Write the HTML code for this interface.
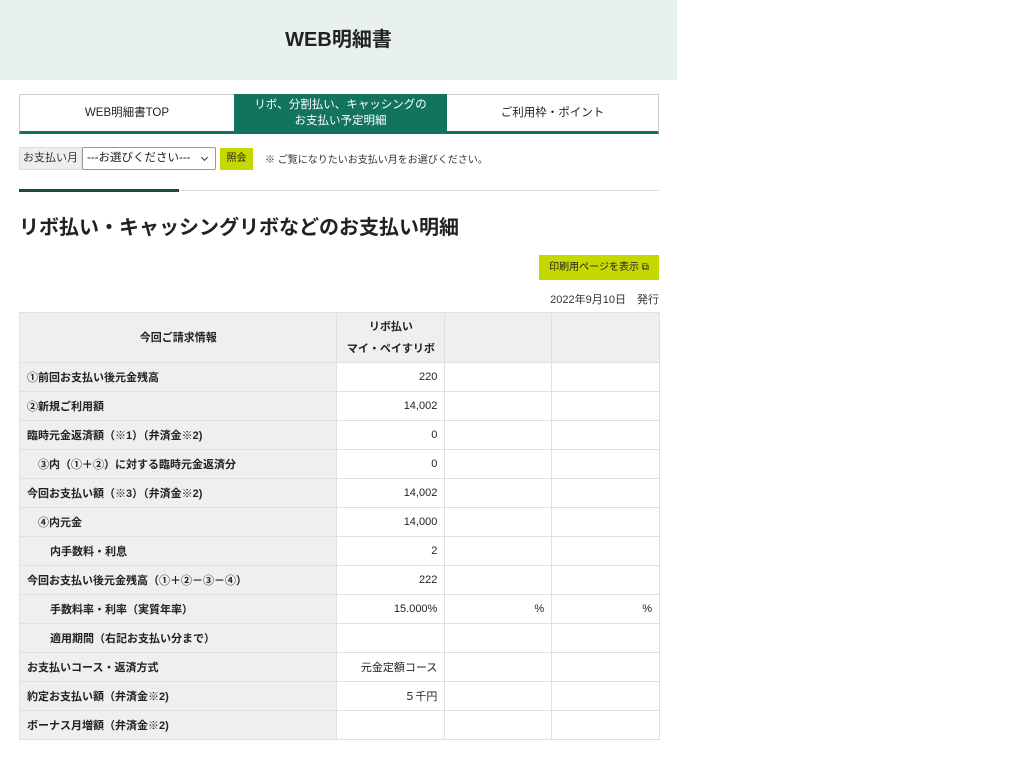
<!DOCTYPE html>
<html><head><meta charset="utf-8"><style>
*{margin:0;padding:0;box-sizing:border-box}
body{width:1024px;height:758px;background:#fff;font-family:"Liberation Sans","Noto Sans CJK JP",sans-serif;color:#333;position:relative;overflow:hidden}
.hd{position:absolute;left:0;top:0;width:677px;height:80px;background:#e8f1f0;text-align:center;line-height:80px;font-size:20px;font-weight:bold;color:#222}
.tabs{position:absolute;left:19px;top:94px;width:640px;height:40px;border:1px solid #ccc;border-bottom:3px solid #10735f;display:flex}
.tabs div{flex:0 0 auto;display:flex;align-items:center;justify-content:center;text-align:center;font-size:11.5px;line-height:16px;color:#222}
.tabs .a{background:#12735f;color:#fff;margin-top:-1px}
.sel{position:absolute;left:19px;top:147px;height:23px;display:flex;font-size:11px;align-items:center}
.lbl{background:#eee;border:1px solid #ddd;height:23px;line-height:21px;padding:0 3px;color:#333}
.dd{width:134px;height:23px;border:1px solid #999;border-radius:2px;line-height:21px;padding-left:4px;font-size:11.5px;color:#222;position:relative;background:#fff}
.dd:after{content:"";position:absolute;right:8px;top:7px;width:4px;height:4px;border-right:1.5px solid #333;border-bottom:1.5px solid #333;transform:rotate(45deg)}
.btn{position:absolute;left:220px;top:148px;width:33px;height:22px;background:#c5d800;font-size:10px;line-height:22px;text-align:center;color:#222}
.note{position:absolute;left:265px;top:151px;font-size:10px;color:#333}
.l1{position:absolute;left:19px;top:190px;width:640px;height:1px;background:#ddd}
.l2{position:absolute;left:19px;top:189px;width:160px;height:3px;background:#1a4d35}
h1{position:absolute;left:19px;top:211px;font-size:20px;font-weight:bold;color:#222}
.pb{position:absolute;left:539px;top:255px;width:120px;height:25px;background:#c5d800;font-size:10px;line-height:25px;text-align:center;color:#222}
.dt{position:absolute;right:365px;top:291px;font-size:11px;color:#333}
table{position:absolute;left:19px;top:312px;width:641px;border-collapse:collapse;font-size:11px}
td{border:1px solid #e0e0e0;height:29px;padding:0 7px;color:#222}
td.h{background:#efefef;font-weight:bold}
td.n{text-align:right}
tr.top td{height:50px;background:#efefef;text-align:center;font-weight:bold;line-height:22px}
</style></head><body>
<div class="hd">WEB明細書</div>
<div class="tabs"><div style="width:214px">WEB明細書TOP</div><div class="a" style="width:213px">リボ、分割払い、キャッシングの<br>お支払い予定明細</div><div style="width:211px">ご利用枠・ポイント</div></div>
<div class="sel"><div class="lbl">お支払い月</div><div class="dd">---お選びください---</div></div>
<div class="btn">照会</div>
<div class="note">※ ご覧になりたいお支払い月をお選びください。</div>
<div class="l1"></div><div class="l2"></div>
<h1>リボ払い・キャッシングリボなどのお支払い明細</h1>
<div class="pb">印刷用ページを表示 ⧉</div>
<div class="dt">2022年9月10日　発行</div>
<table>
<colgroup><col style="width:318px"><col style="width:108px"><col style="width:107px"><col style="width:108px"></colgroup>
<tr class="top"><td>今回ご請求情報</td><td>リボ払い<br>マイ・ペイすリボ</td><td></td><td></td></tr>
<tr><td class="h">①前回お支払い後元金残高</td><td class="n">220</td><td></td><td></td></tr>
<tr><td class="h">②新規ご利用額</td><td class="n">14,002</td><td></td><td></td></tr>
<tr><td class="h">臨時元金返済額（※1）（弁済金※2)</td><td class="n">0</td><td></td><td></td></tr>
<tr><td class="h" style="padding-left:18px">③内（①＋②）に対する臨時元金返済分</td><td class="n">0</td><td></td><td></td></tr>
<tr><td class="h">今回お支払い額（※3）（弁済金※2)</td><td class="n">14,002</td><td></td><td></td></tr>
<tr><td class="h" style="padding-left:18px">④内元金</td><td class="n">14,000</td><td></td><td></td></tr>
<tr><td class="h" style="padding-left:30px">内手数料・利息</td><td class="n">2</td><td></td><td></td></tr>
<tr><td class="h">今回お支払い後元金残高（①＋②－③－④）</td><td class="n">222</td><td></td><td></td></tr>
<tr><td class="h" style="padding-left:30px">手数料率・利率（実質年率）</td><td class="n">15.000%</td><td class="n">%</td><td class="n">%</td></tr>
<tr><td class="h" style="padding-left:30px">適用期間（右記お支払い分まで）</td><td></td><td></td><td></td></tr>
<tr><td class="h">お支払いコース・返済方式</td><td class="n">元金定額コース</td><td></td><td></td></tr>
<tr><td class="h">約定お支払い額（弁済金※2)</td><td class="n">５千円</td><td></td><td></td></tr>
<tr><td class="h">ボーナス月増額（弁済金※2)</td><td></td><td></td><td></td></tr>
</table>
</body></html>
